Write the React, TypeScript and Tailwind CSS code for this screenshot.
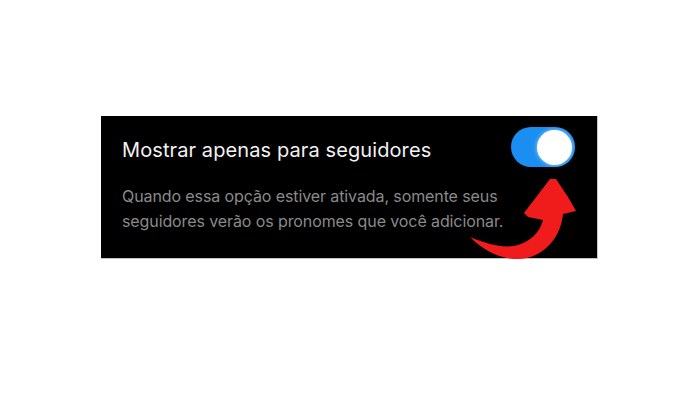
import { useState } from "react";

function Toggle({ on, onChange }: { on: boolean; onChange: () => void }) {
  return (
    <button
      type="button"
      onClick={onChange}
      className={`flex h-[40px] w-[64px] shrink-0 items-center rounded-full p-[3px] ${
        on ? "justify-end bg-[#1b8ef2]" : "justify-start bg-[#3a3a3c]"
      }`}
    >
      <span className="block h-[35px] w-[35px] rounded-full bg-white shadow-[0_0_4px_rgba(255,255,255,0.6)]" />
    </button>
  );
}

// Hand-drawn red pointer curving up to the switch
function CurvedArrow() {
  return (
    <svg
      width="120"
      height="92"
      viewBox="0 0 120 92"
      className="pointer-events-none absolute left-[363px] top-[53px]"
    >
      <path
        d="M6 68 C20 82 36 90 54 90 C74 90 96 74 99 45 L112 42 L104 28 L92 10 L86 10 L60 44 L64 48 L79 51 C76 63 66 74 50 77 C34 79 18 73 6 68 Z"
        fill="#f01c1c"
      />
    </svg>
  );
}

export default function App() {
  const [followersOnly, setFollowersOnly] = useState(true);

  return (
    <div className="h-[400px] w-[700px] bg-white pl-[101px] pt-[116px]">
      <div className="relative h-[143px] w-[497px] border-b border-r border-[#c4c4c4] bg-black pl-[21px] pr-[22px] pt-[11px] font-['Inter','Liberation_Sans',sans-serif]">
        <div className="flex items-start justify-between">
          <h2 className="mt-[11px] text-[20px] leading-[24px] tracking-[0.1px] text-[#f2f2f2]">
            Mostrar apenas para seguidores
          </h2>
          <Toggle on={followersOnly} onChange={() => setFollowersOnly(!followersOnly)} />
        </div>
        <p className="mt-[17px] w-[390px] text-[16px] leading-[25px] tracking-[-0.1px] text-[#8a8a8a]">
          Quando essa opção estiver ativada, somente seus seguidores verão os pronomes que você
          adicionar.
        </p>
        <CurvedArrow />
      </div>
    </div>
  );
}
